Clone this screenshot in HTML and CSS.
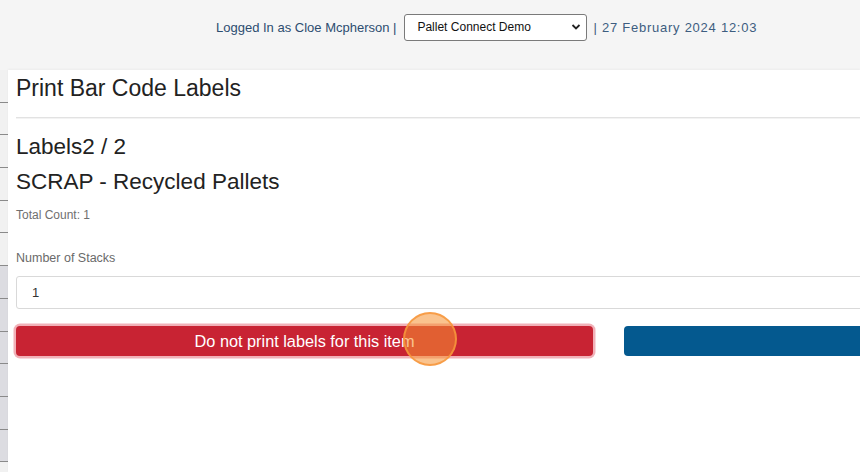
FILE: index.html
```html
<!DOCTYPE html>
<html>
<head>
<meta charset="utf-8">
<link rel="stylesheet" href="styles.css">
</head>
<body>
<header class="topbar">
  <span class="user">Logged In as Cloe Mcpherson |</span>
  <div class="select">
    <span>Pallet Connect Demo</span>
    <svg class="chev" width="10" height="8" viewBox="0 0 10 8"><path d="M1.5 2 L5 5.5 L8.5 2" fill="none" stroke="#222" stroke-width="1.8"/></svg>
  </div>
  <span class="date">| 27 February 2024 12:03</span>
</header>
<div class="main">
  <div class="sidebar">
    <div class="row"></div><div class="row"></div><div class="row"></div><div class="row"></div><div class="row"></div><div class="row"></div>
    <div class="row dark"></div><div class="row dark"></div><div class="row dark"></div><div class="row dark"></div><div class="row dark"></div><div class="row dark"></div>
  </div>
  <div class="panel">
    <div class="inner">
      <h1 class="title">Print Bar Code Labels</h1>
      <div class="rule"></div>
      <h2 class="sub">Labels2 / 2</h2>
      <h2 class="sub sub2">SCRAP - Recycled Pallets</h2>
      <div class="count">Total Count: 1</div>
      <label class="lbl">Number of Stacks</label>
      <div class="input">1</div>
      <div class="buttons">
        <div class="btn red">Do not print labels for this item</div>
        <div class="btn blue"></div>
      </div>
    </div>
    <div class="click"></div>
  </div>
</div>
</body>
</html>
```
FILE: styles.css
```css
html, body {
  margin: 0;
  padding: 0;
}
body {
  background: #f5f5f5;
  font-family: "Liberation Sans", Arial, sans-serif;
  width: 860px;
  height: 472px;
  overflow: hidden;
}
.topbar {
  height: 70px;
  box-sizing: border-box;
  display: flex;
  align-items: center;
  padding: 0 0 16px 216px;
  font-size: 13px;
  color: #2d4d70;
}
.select {
  margin: 0 6px 0 8px;
  width: 183px;
  height: 27px;
  box-sizing: border-box;
  border: 1px solid #7a7a7a;
  border-radius: 3px;
  background: #fff;
  display: flex;
  align-items: center;
  justify-content: space-between;
  padding: 0 5px 0 12px;
  font-size: 12px;
  color: #111;
}
.chev { display: block; }
.date {
  color: #3d5d80;
  letter-spacing: 0.75px;
}
.main {
  display: flex;
  height: 402px;
}
.sidebar {
  width: 8px;
  flex: none;
  background: #f1f1f1;
}
.row {
  height: 32.7px;
  box-sizing: border-box;
  border-bottom: 1px solid #8a8a8a;
}
.row.dark {
  background: #dcdce1;
}
.panel {
  flex: 1;
  background: #fff;
  position: relative;
  overflow: hidden;
  box-shadow: 0 -1px 2px rgba(0,0,0,0.04);
}
.inner {
  width: 1200px;
  padding-left: 8px;
}
.title {
  margin: 0;
  padding-top: 3px;
  font-size: 23px;
  font-weight: normal;
  color: #222;
  line-height: 30px;
}
.rule {
  margin: 14px 0 0 0;
  border-top: 1px solid #e2e2e2;
  border-bottom: 1px solid #f3f3f3;
}
.sub {
  margin: 0;
  font-size: 22.5px;
  font-weight: normal;
  color: #222;
  line-height: 35px;
}
.sub:first-of-type { margin-top: 10px; }
.count {
  margin-top: 9px;
  font-size: 12px;
  color: #6f6f6f;
}
.lbl {
  display: block;
  margin-top: 29px;
  font-size: 12.5px;
  color: #6a6a6a;
}
.input {
  margin-top: 11px;
  height: 33px;
  box-sizing: border-box;
  border: 1px solid #d9d9d9;
  border-radius: 3px;
  padding: 0 0 0 15px;
  display: flex;
  align-items: center;
  font-size: 13px;
  color: #333;
}
.buttons {
  display: flex;
  gap: 31px;
  margin-top: 17px;
}
.btn {
  height: 30px;
  border-radius: 4px;
  display: flex;
  align-items: center;
  justify-content: center;
  font-size: 16.3px;
  color: #fff;
}
.red {
  width: 577px;
  background: #c82333;
  box-shadow: 0 0 0 2.5px rgba(225, 83, 97, 0.45);
}
.blue {
  width: 577px;
  background: #04598f;
}
.click {
  position: absolute;
  left: 395px;
  top: 242px;
  width: 50px;
  height: 50px;
  border-radius: 50%;
  background: rgba(246, 145, 50, 0.55);
  border: 2px solid rgba(247, 150, 60, 0.85);
}
```
